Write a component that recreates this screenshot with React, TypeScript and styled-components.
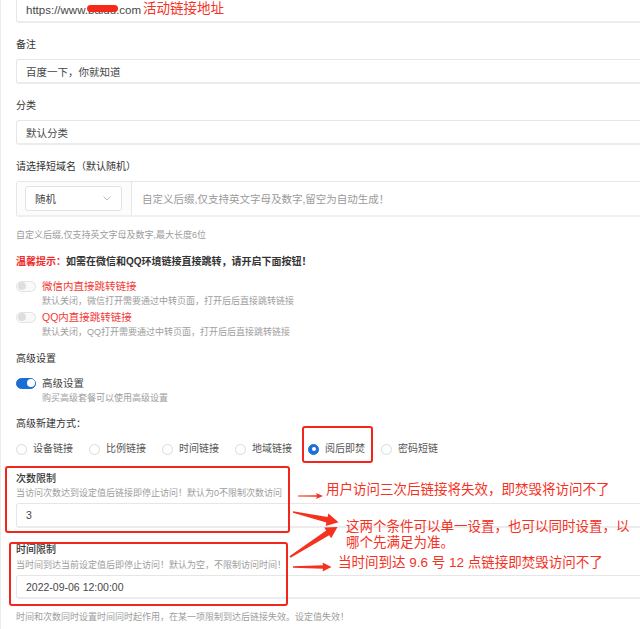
import React from "react";
import styled, { createGlobalStyle } from "styled-components";

const GlobalStyle = createGlobalStyle`
  html, body { margin: 0; padding: 0; background: #fff; overflow: hidden; }
  body { font-family: "Liberation Sans", "Noto Sans CJK SC", sans-serif; }
  * { box-sizing: border-box; }
`;

const RED = "#f4321f";

const Page = styled.div`
  position: relative;
  width: 640px;
  height: 629px;
  overflow: hidden;
  border-left: 1px solid #ececec;
`;

const Form = styled.div`
  display: flex;
  flex-direction: column;
  width: 700px;
  padding-left: 15px;
`;

const Label = styled.div<{ $mt?: number; $strong?: boolean }>`
  margin-top: ${(p) => p.$mt ?? 15}px;
  font-size: 10px;
  line-height: 14px;
  color: #333;
  font-weight: ${(p) => (p.$strong ? 500 : 400)};
`;

const Field = styled.div<{ $mt?: number; $h?: number; $size?: number }>`
  position: relative;
  margin-top: ${(p) => p.$mt ?? 7}px;
  height: ${(p) => p.$h ?? 25}px;
  display: flex;
  align-items: center;
  padding-left: 9px;
  border: 1px solid #e6e6e6;
  border-bottom: 2px solid #ececec;
  border-radius: 3px;
  background: #fff;
  font-size: ${(p) => p.$size ?? 10.5}px;
  color: #474747;
`;

const Help = styled.div<{ $mt?: number }>`
  margin-top: ${(p) => p.$mt ?? 12}px;
  font-size: 9px;
  line-height: 12px;
  color: #9d9d9d;
  white-space: nowrap;
`;

const DomainGroup = styled.div`
  margin-top: 7px;
  height: 36px;
  display: flex;
  border: 1px solid #e6e6e6;
  border-bottom: 2px solid #efefef;
  border-radius: 3px;
`;

const DomainPrefix = styled.div`
  width: 115px;
  display: flex;
  align-items: center;
  padding-left: 8px;
  border-right: 1px solid #e6e6e6;
  background: #fcfcfc;
`;

const Select = styled.div`
  width: 97px;
  height: 25px;
  display: flex;
  align-items: center;
  justify-content: space-between;
  padding: 0 10px 0 9px;
  border: 1px solid #e3e3e3;
  border-radius: 3px;
  background: #fff;
  font-size: 10.5px;
  color: #444;
`;

const Placeholder = styled.div`
  display: flex;
  align-items: center;
  padding-left: 10px;
  font-size: 10.5px;
  color: #9a9a9a;
`;

const Tip = styled.div`
  margin-top: 14px;
  font-size: 10px;
  line-height: 14px;
  font-weight: 700;
  color: #333;
`;

const TipRed = styled.span`
  color: #f02b2b;
`;

const SwitchRow = styled.div<{ $mt?: number }>`
  margin-top: ${(p) => p.$mt ?? 10}px;
  display: grid;
  grid-template-columns: 20px 1fr;
  column-gap: 6px;
  row-gap: 2px;
  align-items: center;
`;

const Toggle = styled.div<{ $on?: boolean }>`
  position: relative;
  width: 20px;
  height: 11px;
  border-radius: 6px;
  border: 1px solid ${(p) => (p.$on ? "#1b6dd6" : "#e2e2e2")};
  background: ${(p) => (p.$on ? "#1b6dd6" : "#f9f9f9")};
  &::after {
    content: "";
    position: absolute;
    top: 0.5px;
    left: ${(p) => (p.$on ? "9.5px" : "0.5px")};
    width: 8px;
    height: 8px;
    border-radius: 50%;
    background: ${(p) => (p.$on ? "#fff" : "#dedee2")};
  }
`;

const SwitchTitle = styled.div<{ $red?: boolean }>`
  font-size: 10.5px;
  line-height: 14px;
  color: ${(p) => (p.$red ? "#f23a36" : "#444")};
`;

const SwitchDesc = styled.div`
  grid-column: 2;
  font-size: 9px;
  line-height: 12px;
  color: #9d9d9d;
  white-space: nowrap;
`;

const RadioGroup = styled.div`
  margin-top: 11px;
  display: flex;
  align-items: center;
  gap: 16px;
  height: 14px;
`;

const RadioItem = styled.label`
  display: flex;
  align-items: center;
  gap: 6px;
  font-size: 10px;
  line-height: 14px;
  color: #555;
`;

const RadioDot = styled.span<{ $checked?: boolean }>`
  position: relative;
  width: 11px;
  height: 11px;
  border-radius: 50%;
  border: 1px solid ${(p) => (p.$checked ? "#1f6fd8" : "#dadada")};
  background: ${(p) => (p.$checked ? "#1f6fd8" : "#fff")};
  &::after {
    content: "";
    display: ${(p) => (p.$checked ? "block" : "none")};
    position: absolute;
    top: 2.5px;
    left: 2.5px;
    width: 4px;
    height: 4px;
    border-radius: 50%;
    background: #fff;
  }
`;

/* ---------- annotation overlays ---------- */

const Box = styled.div`
  position: absolute;
  border: 2px solid #f2261c;
  border-radius: 3px;
  pointer-events: none;
`;

const Note = styled.div`
  position: absolute;
  font-family: "Liberation Sans", "Noto Sans CJK SC", sans-serif;
  font-size: 13.5px;
  line-height: 16px;
  color: ${RED};
  white-space: nowrap;
`;

const Blot = styled.div`
  position: absolute;
  left: 86px;
  top: 5px;
  width: 31px;
  height: 7px;
  border-radius: 4px;
  background: #f5281a;
`;

const ArrowLayer = styled.svg`
  position: absolute;
  left: 0;
  top: 0;
  pointer-events: none;
`;

const Chevron = () => (
  <svg width="8" height="5" viewBox="0 0 8 5">
    <polyline points="0.5,0.5 4,4 7.5,0.5" fill="none" stroke="#b5b5b5" strokeWidth="0.9" />
  </svg>
);

const radios = ["设备链接", "比例链接", "时间链接", "地域链接", "阅后即焚", "密码短链"];

export default function App() {
  return (
    <Page>
      <GlobalStyle />
      <Form>
        <Field $mt={-2} $size={11.5}>https://www.baidu.com</Field>

        <Label>备注</Label>
        <Field>百度一下，你就知道</Field>

        <Label>分类</Label>
        <Field>默认分类</Field>

        <Label>请选择短域名（默认随机）</Label>
        <DomainGroup>
          <DomainPrefix>
            <Select>
              <span>随机</span>
              <Chevron />
            </Select>
          </DomainPrefix>
          <Placeholder>自定义后缀,仅支持英文字母及数字,留空为自动生成！</Placeholder>
        </DomainGroup>
        <Help>自定义后缀,仅支持英文字母及数字,最大长度6位</Help>

        <Tip>
          <TipRed>温馨提示：</TipRed>如需在微信和QQ环境链接直接跳转，请开启下面按钮！
        </Tip>

        <SwitchRow>
          <Toggle />
          <SwitchTitle $red>微信内直接跳转链接</SwitchTitle>
          <SwitchDesc>默认关闭，微信打开需要通过中转页面，打开后后直接跳转链接</SwitchDesc>
        </SwitchRow>
        <SwitchRow $mt={3}>
          <Toggle />
          <SwitchTitle $red>QQ内直接跳转链接</SwitchTitle>
          <SwitchDesc>默认关闭，QQ打开需要通过中转页面，打开后后直接跳转链接</SwitchDesc>
        </SwitchRow>

        <Label $mt={14}>高级设置</Label>
        <SwitchRow>
          <Toggle $on />
          <SwitchTitle>高级设置</SwitchTitle>
          <SwitchDesc>购买高级套餐可以使用高级设置</SwitchDesc>
        </SwitchRow>

        <Label $mt={13}>高级新建方式：</Label>
        <RadioGroup>
          {radios.map((r) => (
            <RadioItem key={r}>
              <RadioDot $checked={r === "阅后即焚"} />
              {r}
            </RadioItem>
          ))}
        </RadioGroup>

        <Label $mt={16} $strong>次数限制</Label>
        <Help $mt={1}>当访问次数达到设定值后链接即停止访问！默认为0不限制次数访问</Help>
        <Field $mt={4}>3</Field>

        <Label $mt={15} $strong>时间限制</Label>
        <Help $mt={2}>当时间到达当前设定值后即停止访问！默认为空，不限制访问时间！</Help>
        <Field $mt={4} $h={24}>2022-09-06 12:00:00</Field>

        <Help>时间和次数同时设置时间同时起作用，在某一项限制到达后链接失效。设定值失效！</Help>
      </Form>

      <Blot />
      <Note style={{ left: 142, top: 1 }}>活动链接地址</Note>

      <Box style={{ left: 301, top: 426, width: 71, height: 37 }} />
      <Box style={{ left: 4, top: 466, width: 285, height: 67 }} />
      <Box style={{ left: 8, top: 542, width: 279, height: 64 }} />

      <Note style={{ left: 325, top: 482 }}>用户访问三次后链接将失效，即焚毁将访问不了</Note>
      <Note style={{ left: 345, top: 519 }}>这两个条件可以单一设置，也可以同时设置，以</Note>
      <Note style={{ left: 345, top: 535 }}>哪个先满足为准。</Note>
      <Note style={{ left: 337, top: 555 }}>当时间到达 9.6 号 12 点链接即焚毁访问不了</Note>

      <ArrowLayer width="640" height="629" viewBox="0 0 640 629">
        <polygon points="297,495.6 316,495.3 315,493 322,496 315,499 316,496.7 297,496.4" fill={RED} />
        <polygon
          points="292,511.2 326.6,517 327.3,513.5 337.5,522.2 324.7,526 325.4,522.4 292,512.8"
          fill={RED}
        />
        <polygon
          points="288.4,556.2 325.2,530.6 323.2,527.5 336.5,527 330.2,538.2 328.2,535.2 289.6,557.8"
          fill={RED}
        />
        <polygon points="292,566.3 322,565.2 321.5,562.6 330.5,567 321.5,571.4 322,568.8 292,567.7" fill={RED} />
      </ArrowLayer>
    </Page>
  );
}
